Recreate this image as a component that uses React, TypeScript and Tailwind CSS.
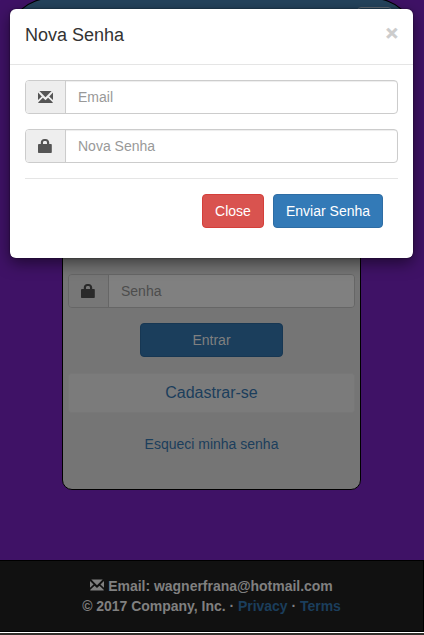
import React from "react";

function Envelope({ className }: { className: string }) {
  return (
    <svg className={className} viewBox="0 0 15 12" fill="currentColor" aria-hidden="true">
      <path d="M1.400 0h12.200L7.500 6.200z" />
      <path d="M0 1.600 3.800 5.500 0 9zM15 1.600V9l-3.800-3.500z" />
      <path d="M4.900 6.700 7.500 9.200l2.600-2.500L14.700 11.200V12H.3v-.8z" />
    </svg>
  );
}

function Lock({ className }: { className: string }) {
  return (
    <svg className={className} viewBox="0 0 14 14" fill="currentColor" aria-hidden="true">
      <path
        fillRule="evenodd"
        d="M1 5H2.800V3.600C2.800 1.400 4.400 0 6.200 0h1.400C9.600 0 11.200 1.500 11.200 3.600V5H13c.5 0 .8.3.8.8v7.400c0 .5-.3.8-.8.8H.8c-.5 0-.8-.3-.8-.8V5.800c0-.5.3-.8 1-.8zM5 5h4V3.700C9 2.600 8.400 2 7.500 2h-1C5.600 2 5 2.600 5 3.700z"
      />
    </svg>
  );
}

function Field({ icon, label }: { icon: React.ReactNode; label: string }) {
  return (
    <div className="flex h-[34px] overflow-hidden rounded-[4px] border border-[#ccc] bg-white">
      <span className="flex w-10 shrink-0 items-center border-r border-[#ccc] bg-[#eee] pl-3 text-[#555]">
        {icon}
      </span>
      <input
        type="text"
        placeholder={label}
        className="min-w-0 flex-1 px-3 pb-px shadow-[inset_0_1px_1px_rgba(0,0,0,0.075)] outline-none placeholder:text-[#999]"
      />
    </div>
  );
}

function LoginPage() {
  return (
    <div className="flex h-[635px] flex-col">
      <header className="-mt-[2px] ml-[10px] mr-[11px] flex h-[102px] shrink-0 justify-end rounded-t-[40px_36px] border border-black bg-[#24435c] pr-[20px] pt-[8px]">
        <div className="h-[34px] w-[35px] rounded-[4px] border border-[#5f6b75]" />
      </header>
      <main className="ml-[62px] h-[390px] w-[299px] shrink-0 rounded-[10px] border border-black bg-[#757575] px-[5px] pt-[173px]">
        <div className="flex h-[34px] overflow-hidden rounded-[4px] border border-[#666]">
          <span className="flex w-10 shrink-0 items-center border-r border-[#666] bg-[#777] pl-3 text-[#2a2a2a]">
            <Lock className="h-[14px] w-[14px]" />
          </span>
          <input
            type="password"
            placeholder="Senha"
            className="min-w-0 flex-1 bg-[#808080] px-3 pb-px outline-none placeholder:text-[#4d4d4d]"
          />
        </div>
        <button className="ml-[72px] mt-[15px] block h-[34px] w-[143px] rounded-[4px] border border-[#173753] bg-[#1b3e5c] text-[#808080]">
          Entrar
        </button>
        <a className="mt-4 flex h-10 items-center justify-center rounded-[3px] border border-[#777] bg-[#7b7b7b] pb-px text-[16px] text-[#1b3e5c]">
          Cadastrar-se
        </a>
        <a className="mt-[21px] block text-center text-[#1b3e5c]">Esqueci minha senha</a>
      </main>
      <footer className="mt-[70px] h-[72px] shrink-0 border-y border-r border-black bg-[#111] pt-[15px] text-center font-bold tracking-[-0.025px] text-[#808080]">
        <div className="flex items-center justify-center gap-1">
          <Envelope className="h-[12px] w-[14px] -translate-y-px" />
          <span>Email: wagnerfrana@hotmail.com</span>
        </div>
        <div>
          © 2017 Company, Inc. · <a className="text-[#1b3e5c]">Privacy</a> ·{" "}
          <a className="text-[#1b3e5c]">Terms</a>
        </div>
      </footer>
      <div className="h-[3px] shrink-0 border-t border-white bg-[#33302c]" />
    </div>
  );
}

function PasswordDialog() {
  return (
    <section
      role="dialog"
      className="absolute left-[10px] top-[9px] h-[249px] w-[403px] rounded-[6px] bg-white shadow-[0_5px_15px_rgba(0,0,0,0.5),0_0_2px_rgba(0,0,0,0.6)]"
    >
      <header className="flex h-14 items-start justify-between border-b border-[#e5e5e5] px-[15px] pt-[14px]">
        <h4 className="text-[18px] leading-[25px]">Nova Senha</h4>
        <button
          aria-label="Fechar"
          className="-mt-px text-[21px] font-bold leading-[21px] text-[#ccc] [-webkit-text-stroke:0.6px_#ccc]"
        >
          ×
        </button>
      </header>
      <div className="px-[15px] pt-[15px]">
        <div className="flex flex-col gap-[15px]">
          <Field label="Email" icon={<Envelope className="h-[12px] w-[15px]" />} />
          <Field label="Nova Senha" icon={<Lock className="h-[14px] w-[14px]" />} />
        </div>
        <div className="mt-[15px] flex justify-end gap-[9px] border-t border-[#e5e5e5] pr-[15px] pt-[15px] text-white">
          <button className="h-[34px] w-[62px] rounded-[4px] border border-[#d43f3a] bg-[#d9534f]">
            Close
          </button>
          <button className="h-[34px] w-[110px] rounded-[4px] border border-[#2e6da4] bg-[#337ab7]">
            Enviar Senha
          </button>
        </div>
      </div>
    </section>
  );
}

export default function App() {
  return (
    <div className="relative h-[635px] w-[424px] overflow-hidden bg-[#3f1266] font-['Liberation_Sans',Arial,sans-serif] text-[14px] leading-5 text-[#333]">
      <LoginPage />
      <PasswordDialog />
    </div>
  );
}
